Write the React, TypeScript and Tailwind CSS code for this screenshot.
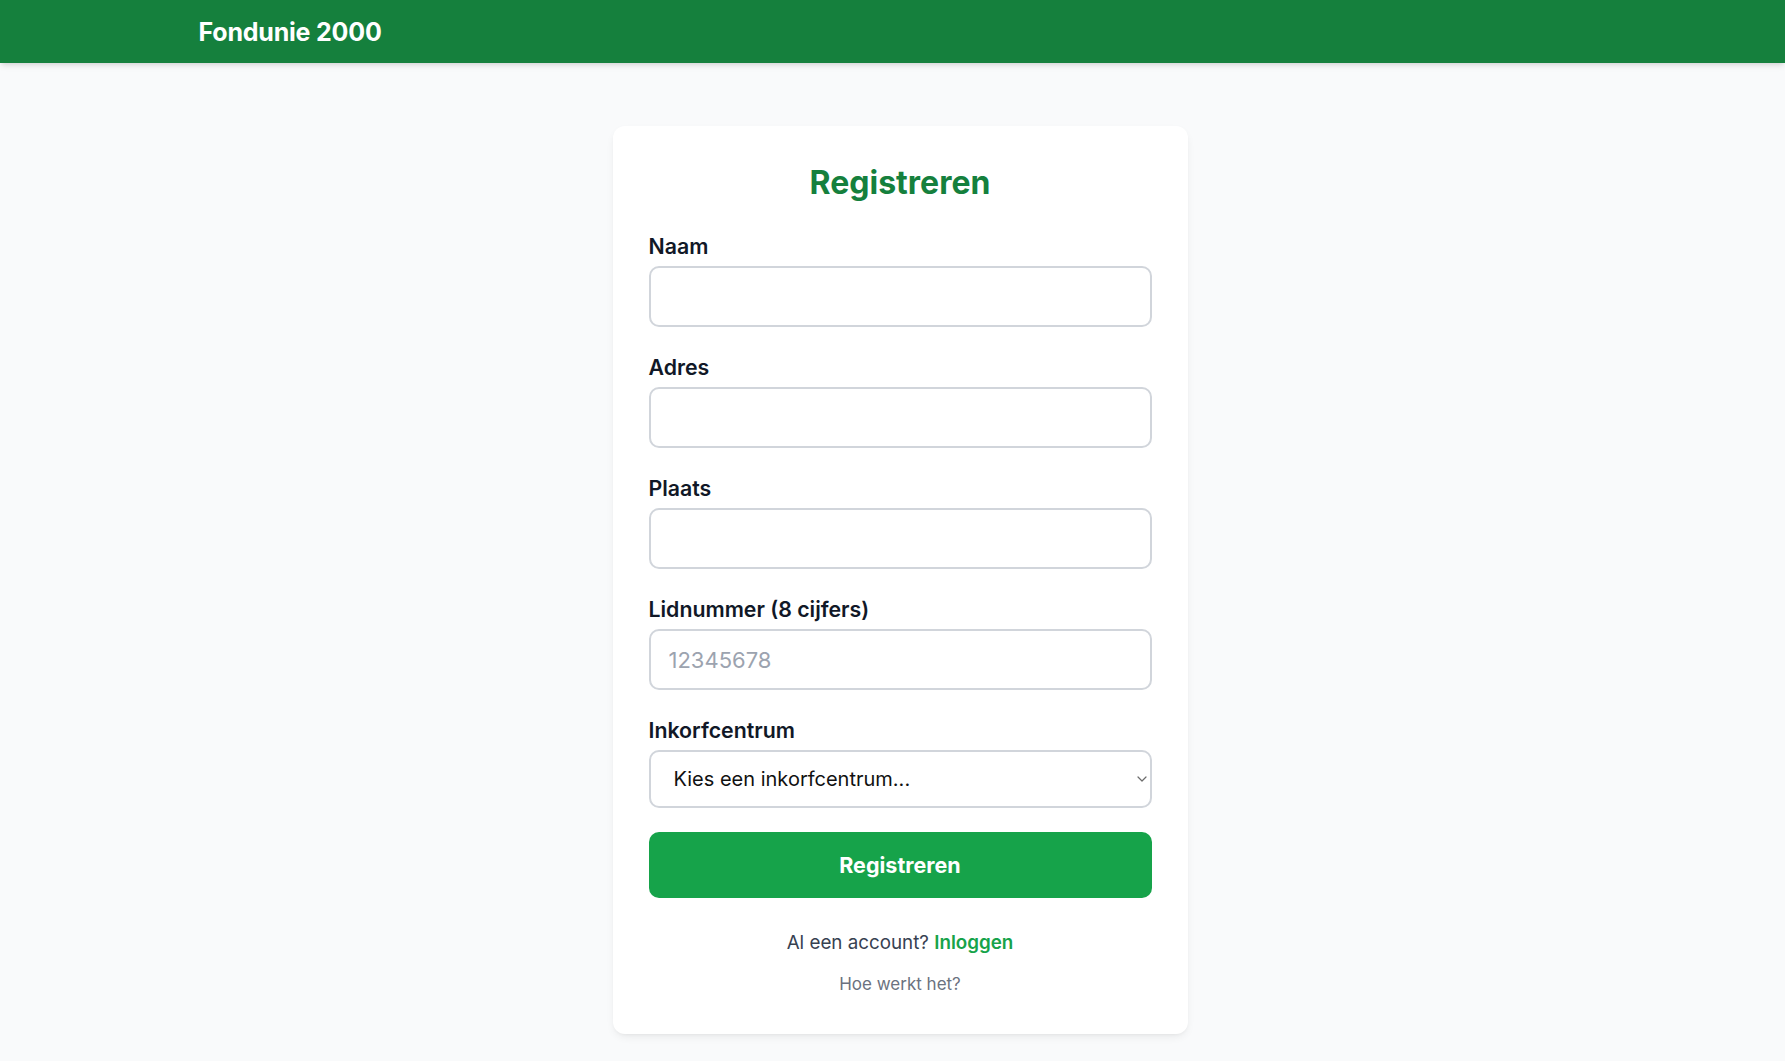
import { useState } from 'react';

const fields = [
  { id: 'naam', label: 'Naam', placeholder: '' },
  { id: 'adres', label: 'Adres', placeholder: '' },
  { id: 'plaats', label: 'Plaats', placeholder: '' },
  { id: 'lidnummer', label: 'Lidnummer (8 cijfers)', placeholder: '12345678' },
];

export default function App() {
  const [centrum, setCentrum] = useState('');

  return (
    <div className="min-h-screen bg-[#f9fafb] font-['Inter','Noto_Sans',sans-serif] antialiased">
      {/* Top bar */}
      <header className="h-[63px] bg-[#15803d] shadow-md flex items-center">
        <div className="w-full max-w-[1440px] mx-auto px-[26px] pt-[2px]">
          <h1 className="text-[25px] leading-[35px] font-bold text-white tracking-[-0.2px]">Fondunie 2000</h1>
        </div>
      </header>

      <main className="pt-[63px] pb-10 pl-[15px]">
        <div className="w-[575px] mx-auto bg-white rounded-[12px] shadow-[0_4px_10px_-2px_rgba(0,0,0,0.08),0_2px_4px_-2px_rgba(0,0,0,0.06)] px-[36px] pt-[39px] pb-[37px]">
          <h2 className="text-[32px] leading-[36px] font-bold text-[#15803d] text-center mb-[30px]">Registreren</h2>

          <form className="flex flex-col gap-[25px]" onSubmit={(e) => e.preventDefault()}>
            {fields.map((f) => (
              <div key={f.id}>
                <label htmlFor={f.id} className="block text-[21.3px] leading-[30px] font-semibold text-[#111827] mb-[5px]">
                  {f.label}
                </label>
                <input
                  id={f.id}
                  type="text"
                  placeholder={f.placeholder}
                  className="block w-full h-[61px] rounded-[10px] border-2 border-[#d1d5db] bg-white px-[18px] text-[22px] text-[#111827] placeholder:text-[#9ca3af] outline-none"
                />
              </div>
            ))}

            <div>
              <label htmlFor="centrum" className="block text-[21.3px] leading-[30px] font-semibold text-[#111827] mb-[5px]">
                Inkorfcentrum
              </label>
              <div className="relative">
                <select
                  id="centrum"
                  value={centrum}
                  onChange={(e) => setCentrum(e.target.value)}
                  className="block w-full h-[58px] appearance-none rounded-[10px] border-2 border-[#d1d5db] bg-white pl-[23px] pr-8 text-[20px] text-[#111111] outline-none"
                >
                  <option value="">Kies een inkorfcentrum...</option>
                </select>
                <svg className="absolute right-[5px] top-1/2 -translate-y-1/2 pointer-events-none" width="10" height="6" viewBox="0 0 10 6" fill="none">
                  <path d="M1 1l4 4 4-4" stroke="#6b6b6b" strokeWidth="1.2" strokeLinecap="round" strokeLinejoin="round" />
                </svg>
              </div>
            </div>

            <button
              type="submit"
              className="mt-[-1px] h-[66px] w-full rounded-[10px] bg-[#16a34a] text-white text-[21.5px] font-bold"
            >
              Registreren
            </button>
          </form>

          <p className="mt-[30px] text-center text-[18.8px] leading-[30px] text-[#374151]">
            Al een account? <a href="#" className="font-semibold text-[#16a34a]">Inloggen</a>
          </p>
          <p className="mt-[14px] text-center text-[17px] leading-[25px] text-[#6b7280]">
            <a href="#">Hoe werkt het?</a>
          </p>
        </div>
      </main>
    </div>
  );
}
